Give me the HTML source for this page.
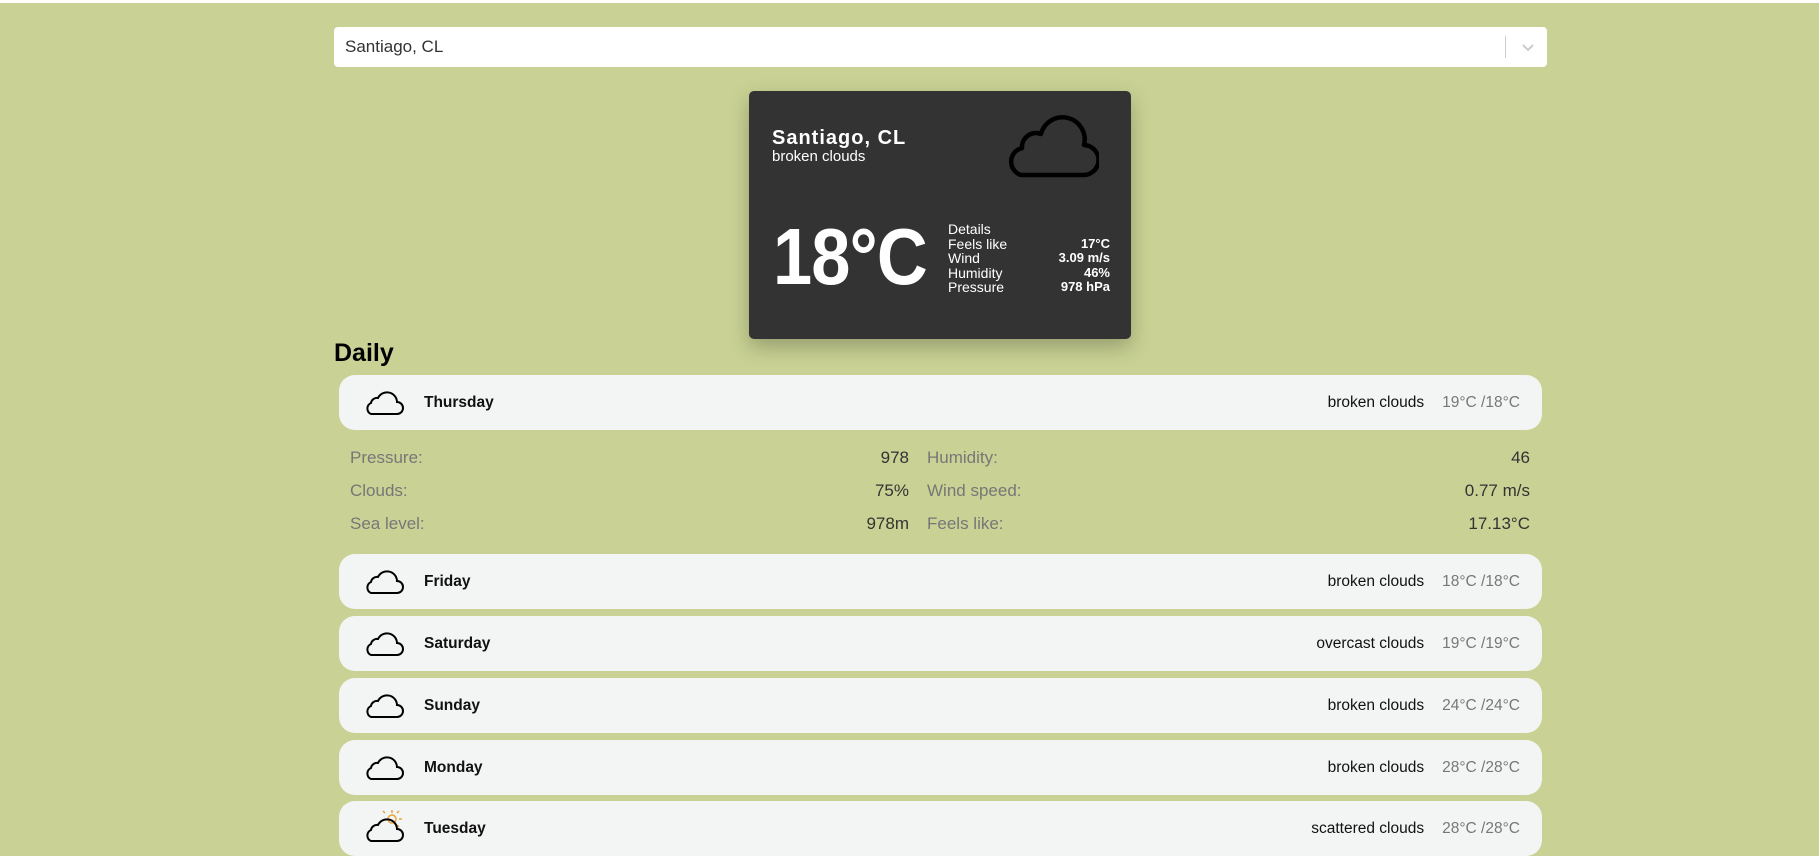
<!DOCTYPE html>
<html><head><meta charset="utf-8"><style>
*{box-sizing:border-box;margin:0;padding:0}
body{width:1819px;height:842px;overflow:hidden;background:#c9d294;font-family:"Liberation Sans",Arial,sans-serif;position:relative}
.top{position:absolute;left:0;top:0;width:1819px;height:3px;background:#fff}
.search{position:absolute;left:334px;top:27px;width:1213px;height:40px;background:#fff;border-radius:4px;}
.search span{position:absolute;left:11px;top:10px;font-size:17px;color:#333}
.search .sep{position:absolute;left:1171px;top:9px;width:1px;height:22px;background:#ccc}
.search svg{position:absolute;left:1186px;top:13px}
.card{position:absolute;left:749px;top:91px;width:382px;height:248px;background:#333;border-radius:5px;box-shadow:0 8px 20px rgba(0,0,0,.25);color:#fff}
.card .city{position:absolute;left:23px;top:36px;font-weight:bold;font-size:20px;letter-spacing:1px}
.card .desc{position:absolute;left:23px;top:57px;font-size:15px}
.card .icon{position:absolute;left:256px;top:24px}
.card .temp{position:absolute;left:24px;top:120px;font-size:80px;font-weight:bold;letter-spacing:-1px;transform:scaleX(0.88);transform-origin:left top}
.card .det{position:absolute;left:199px;top:131px;width:162px;font-size:14px;line-height:14.6px}
.det div{display:flex;justify-content:space-between}
.det b{font-size:13px}
h2{position:absolute;left:334px;top:339px;font-size:25px;font-weight:bold;color:#000}
.row{position:absolute;left:339px;width:1203px;height:55px;background:#f3f5f4;border-radius:16px;font-size:15.5px}
.row .ic{position:absolute;left:25px;top:15px}
.row .day{position:absolute;left:85px;top:19px;font-weight:bold;color:#111}
.row .r{position:absolute;right:22px;top:19px;color:#111}
.row .r i{font-style:normal;color:#777;margin-left:18px}
.dl{position:absolute;font-size:17px;color:#777}
.dv{position:absolute;font-size:17px;color:#333;text-align:right}
</style></head><body>
<div class="top"></div>
<div class="search"><span>Santiago, CL</span><div class="sep"></div>
<svg width="16" height="14" viewBox="0 0 16 14"><path d="M3 5l5 5 5-5" stroke="#ccc" stroke-width="2" fill="none"/></svg></div>
<div class="card">
<div class="city">Santiago, CL</div><div class="desc">broken clouds</div>
<svg class="icon" width="94" height="66" viewBox="0 0 94 66"><path d="M16 60 A14 14 0 0 1 17 33 A14 14 0 0 1 36 19 A22 22 0 0 1 79 30 A15 15 0 0 1 78 60 Z" fill="none" stroke="#000" stroke-width="4.5" stroke-linejoin="round"/></svg>
<div class="temp">18°C</div>
<div class="det"><div><span>Details</span></div><div><span>Feels like</span><b>17°C</b></div><div><span>Wind</span><b>3.09 m/s</b></div><div><span>Humidity</span><b>46%</b></div><div><span>Pressure</span><b>978 hPa</b></div></div>
</div>
<h2>Daily</h2>
<div class="row" style="top:375px"><svg class="ic" width="40" height="26" viewBox="0 0 40 26"><path d="M7 24 A6 6 0 0 1 7 13 A6 6 0 0 1 14 8 A10 10 0 0 1 33 12 A6 6 0 0 1 33 24 Z" fill="none" stroke="#000" stroke-width="2"/></svg><span class="day">Thursday</span><span class="r">broken clouds<i>19°C /18°C</i></span></div>
<span class="dl" style="left:350px;top:448px">Pressure:</span><span class="dv" style="right:910px;top:448px">978</span>
<span class="dl" style="left:927px;top:448px">Humidity:</span><span class="dv" style="right:289px;top:448px">46</span>
<span class="dl" style="left:350px;top:481px">Clouds:</span><span class="dv" style="right:910px;top:481px">75%</span>
<span class="dl" style="left:927px;top:481px">Wind speed:</span><span class="dv" style="right:289px;top:481px">0.77 m/s</span>
<span class="dl" style="left:350px;top:514px">Sea level:</span><span class="dv" style="right:910px;top:514px">978m</span>
<span class="dl" style="left:927px;top:514px">Feels like:</span><span class="dv" style="right:289px;top:514px">17.13°C</span>
<div class="row" style="top:554px"><svg class="ic" width="40" height="26" viewBox="0 0 40 26"><path d="M7 24 A6 6 0 0 1 7 13 A6 6 0 0 1 14 8 A10 10 0 0 1 33 12 A6 6 0 0 1 33 24 Z" fill="none" stroke="#000" stroke-width="2"/></svg><span class="day">Friday</span><span class="r">broken clouds<i>18°C /18°C</i></span></div>
<div class="row" style="top:616px"><svg class="ic" width="40" height="26" viewBox="0 0 40 26"><path d="M7 24 A6 6 0 0 1 7 13 A6 6 0 0 1 14 8 A10 10 0 0 1 33 12 A6 6 0 0 1 33 24 Z" fill="none" stroke="#000" stroke-width="2"/></svg><span class="day">Saturday</span><span class="r">overcast clouds<i>19°C /19°C</i></span></div>
<div class="row" style="top:678px"><svg class="ic" width="40" height="26" viewBox="0 0 40 26"><path d="M7 24 A6 6 0 0 1 7 13 A6 6 0 0 1 14 8 A10 10 0 0 1 33 12 A6 6 0 0 1 33 24 Z" fill="none" stroke="#000" stroke-width="2"/></svg><span class="day">Sunday</span><span class="r">broken clouds<i>24°C /24°C</i></span></div>
<div class="row" style="top:740px"><svg class="ic" width="40" height="26" viewBox="0 0 40 26"><path d="M7 24 A6 6 0 0 1 7 13 A6 6 0 0 1 14 8 A10 10 0 0 1 33 12 A6 6 0 0 1 33 24 Z" fill="none" stroke="#000" stroke-width="2"/></svg><span class="day">Monday</span><span class="r">broken clouds<i>28°C /28°C</i></span></div>
<div class="row" style="top:801px"><svg class="ic" style="top:8px" width="40" height="34" viewBox="0 0 40 34"><g stroke="#e8a33a" stroke-width="1.5"><circle cx="28" cy="10" r="4" fill="none"/><path d="M28 1v3M35 10h3M33 4l2-2M33 16l2 2M21 4l-2-2"/></g><path d="M7 32 A6 6 0 0 1 7 21 A6 6 0 0 1 14 16 A10 10 0 0 1 33 20 A6 6 0 0 1 33 32 Z" fill="none" stroke="#000" stroke-width="2"/></svg><span class="day">Tuesday</span><span class="r">scattered clouds<i>28°C /28°C</i></span></div>
</body></html>
